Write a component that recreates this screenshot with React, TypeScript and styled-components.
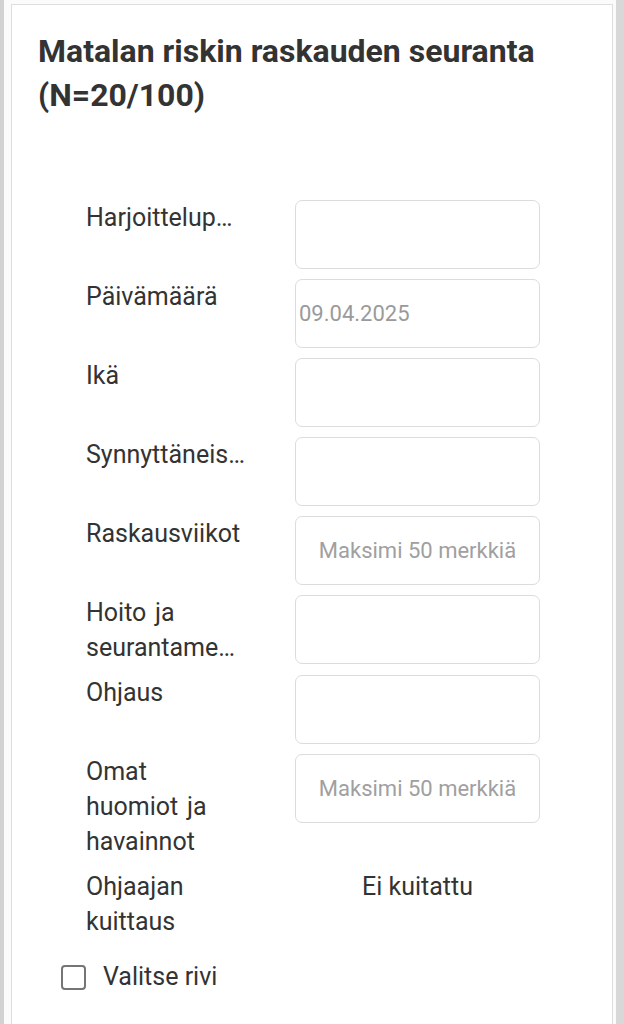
import React from 'react';
import styled, { createGlobalStyle } from 'styled-components';

const GlobalStyle = createGlobalStyle`
  html, body {
    margin: 0;
    padding: 0;
    background: #ffffff;
  }
  body {
    font-family: Roboto, "Noto Sans", "Liberation Sans", sans-serif;
    color: #333333;
  }
`;

const Shell = styled.div`
  min-height: 1024px;
  box-sizing: border-box;
  padding: 4px 3px 0 7px;
  border-left: 4px solid #d2d2d2;
  border-right: 8px solid #d8d8d8;
  background: #fbfbfb;
`;

const Card = styled.section`
  min-height: 1020px;
  box-sizing: border-box;
  background: #ffffff;
  border: 1px solid #dedede;
  border-bottom: none;
  padding: 24px 0 0 26px;
`;

const Title = styled.h1`
  margin: 0;
  font-size: 32px;
  line-height: 44px;
  font-weight: 700;
  color: #333333;
  max-width: 540px;
`;

const Form = styled.div`
  display: flex;
  flex-direction: column;
  gap: 10px;
  margin-top: 83px;
  padding-left: 48px;
`;

const Row = styled.div`
  display: grid;
  grid-template-columns: 209px 245px;
  align-items: start;
`;

const Label = styled.div`
  width: 160px;
  font-size: 25px;
  line-height: 35px;
  word-spacing: 2.5px;
  overflow: hidden;
  text-overflow: ellipsis;
  color: #333333;
`;

const Field = styled.input<{ $left?: boolean }>`
  box-sizing: border-box;
  width: 245px;
  height: 69px;
  margin: 0;
  border: 1.5px solid #dcdcdc;
  border-radius: 7px;
  background: #ffffff;
  font-family: Roboto, "Noto Sans", "Liberation Sans", sans-serif;
  font-size: 22px;
  color: #9a9a9a;
  text-align: ${(p) => (p.$left ? 'left' : 'center')};
  padding: ${(p) => (p.$left ? '0 3px' : '0 6px')};
  outline: none;

  &::placeholder {
    color: #a0a0a0;
  }
`;

const Status = styled.div`
  font-size: 25px;
  line-height: 35px;
  text-align: center;
  color: #333333;
`;

const SelectRow = styled.label`
  display: flex;
  align-items: center;
  gap: 17px;
  margin-top: 20px;
  padding-left: 23px;
  font-size: 25px;
  line-height: 36px;
  color: #333333;
`;

const Box = styled.input`
  appearance: none;
  margin: 0;
  width: 25px;
  height: 25px;
  border: 2px solid #757575;
  border-radius: 4px;
  background: #ffffff;
`;

type FieldRow = {
  label: string;
  value?: string;
  placeholder?: string;
};

const rows: FieldRow[] = [
  { label: 'Harjoittelupaikka' },
  { label: 'Päivämäärä', value: '09.04.2025' },
  { label: 'Ikä' },
  { label: 'Synnyttäneisyys' },
  { label: 'Raskausviikot', placeholder: 'Maksimi 50 merkkiä' },
  { label: 'Hoito ja seurantamenetelmät' },
  { label: 'Ohjaus' },
  { label: 'Omat huomiot ja havainnot', placeholder: 'Maksimi 50 merkkiä' },
];

const App: React.FC = () => {
  return (
    <>
      <GlobalStyle />
      <Shell>
        <Card>
          <Title>Matalan riskin raskauden seuranta (N=20/100)</Title>
          <Form>
            {rows.map((r) => (
              <Row key={r.label}>
                <Label>{r.label}</Label>
                {r.value ? (
                  <Field $left readOnly value={r.value} />
                ) : (
                  <Field placeholder={r.placeholder} />
                )}
              </Row>
            ))}
            <Row>
              <Label>Ohjaajan kuittaus</Label>
              <Status>Ei kuitattu</Status>
            </Row>
          </Form>
          <SelectRow>
            <Box type="checkbox" />
            Valitse rivi
          </SelectRow>
        </Card>
      </Shell>
    </>
  );
};

export default App;
